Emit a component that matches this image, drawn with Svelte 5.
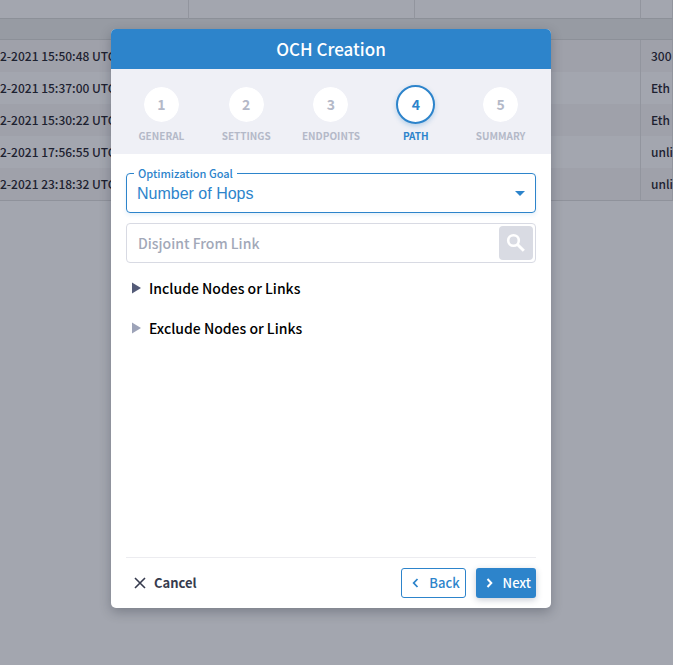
<script>
  const events = [
    { time: '2-2021 15:50:48 UTC', rate: '300' },
    { time: '2-2021 15:37:00 UTC', rate: 'Eth' },
    { time: '2-2021 15:30:22 UTC', rate: 'Eth' },
    { time: '2-2021 17:56:55 UTC', rate: 'unli' },
    { time: '2-2021 23:18:32 UTC', rate: 'unli' }
  ]

  const steps = ['General', 'Settings', 'Endpoints', 'Path', 'Summary']
  let current = 3

  let goal = 'Number of Hops'
  let disjoint = ''
  let includeOpen = false
  let excludeOpen = false
</script>

<div class="page">
  <table class="events">
    <thead>
      <tr><th></th><th></th><th></th><th></th></tr>
    </thead>
    <tbody>
      <tr class="filler"><td colspan="4"></td></tr>
      {#each events as event}
        <tr>
          <td>{event.time}</td>
          <td></td>
          <td></td>
          <td>{event.rate}</td>
        </tr>
      {/each}
    </tbody>
  </table>

  <div class="overlay">
    <div class="modal" role="dialog" aria-labelledby="title">
      <h1 id="title">OCH Creation</h1>

      <ol class="steps">
        {#each steps as step, i}
          <li class:active={i === current}>
            <span class="number">{i + 1}</span>
            <span class="name">{step}</span>
          </li>
        {/each}
      </ol>

      <div class="content">
        <fieldset class="goal">
          <legend><label for="goal">Optimization Goal</label></legend>
          <select id="goal" bind:value={goal}>
            <option>Number of Hops</option>
          </select>
          <svg class="caret" width="10" height="5" viewBox="0 0 10 5" aria-hidden="true">
            <path d="M0 0h10L5 5z" fill="currentColor" />
          </svg>
        </fieldset>

        <div class="disjoint">
          <input type="text" aria-label="Disjoint From Link" placeholder="Disjoint From Link" bind:value={disjoint} />
          <button class="search" aria-label="Search">
            <svg width="24" height="24" viewBox="0 0 24 24" aria-hidden="true">
              <circle cx="9.5" cy="9.5" r="5.3" fill="none" stroke="#fff" stroke-width="2.6" />
              <path d="M13.5 13.5l6.3 6.3" stroke="#fff" stroke-width="3" />
            </svg>
          </button>
        </div>

        <button class="toggle include" aria-expanded={includeOpen} on:click={() => includeOpen = !includeOpen}>
          <svg width="9" height="12" viewBox="0 0 9 12" aria-hidden="true"><path d="M0 .5v11L9 6z" fill="currentColor" /></svg>
          <span>Include Nodes or Links</span>
        </button>
        <button class="toggle exclude" aria-expanded={excludeOpen} on:click={() => excludeOpen = !excludeOpen}>
          <svg width="9" height="12" viewBox="0 0 9 12" aria-hidden="true"><path d="M0 .5v11L9 6z" fill="currentColor" /></svg>
          <span>Exclude Nodes or Links</span>
        </button>
      </div>

      <div class="footer">
        <button class="cancel">
          <svg width="12" height="12" viewBox="0 0 12 12" aria-hidden="true">
            <path d="M1 1l10 10M11 1L1 11" stroke="currentColor" stroke-width="1.6" />
          </svg>
          Cancel
        </button>
        <button class="back">
          <svg width="7" height="10" viewBox="0 0 7 10" aria-hidden="true">
            <path d="M5.5 1L1.7 5l3.8 4" fill="none" stroke="currentColor" stroke-width="1.8" />
          </svg>
          Back
        </button>
        <button class="next">
          <svg width="7" height="10" viewBox="0 0 7 10" aria-hidden="true">
            <path d="M1.5 1l3.8 4-3.8 4" fill="none" stroke="currentColor" stroke-width="2" />
          </svg>
          Next
        </button>
      </div>
    </div>
  </div>
</div>

<style>
  :global(body) {
    background: #a3a6af;
  }

  .page {
    position: relative;
    min-height: 100vh;
    overflow: hidden;
    font-family: "Noto Sans CJK SC", "Open Sans", sans-serif;
    font-size: 14px;
    line-height: 20px;
    color: #1d2130;
  }

  button, input {
    font-family: inherit;
    font-size: inherit;
    line-height: inherit;
  }

  button {
    display: flex;
    align-items: center;
    box-sizing: border-box;
    padding: 0;
    border: none;
    background: none;
    cursor: pointer;
  }

  .events {
    width: 100%;
    table-layout: fixed;
    border-collapse: separate;
    border-spacing: 0;
    border-bottom: 1px solid #8f929b;
    font-size: 12px;
    font-weight: 500;
    white-space: nowrap;
  }

  .events th, .events td {
    box-sizing: border-box;
    padding: 0;
    border-right: 1px solid #92959e;
  }

  .events th {
    height: 19px;
    border-bottom: 1px solid #8c9098;
  }

  .events th:first-child {
    width: 189px;
  }

  .events th:nth-child(2), .events th:nth-child(3) {
    width: 226px;
  }

  .events td {
    height: 32px;
  }

  .events td:last-child {
    padding-left: 10px;
  }

  .events tr:nth-child(even) td {
    background: #9fa1aa;
  }

  .events .filler td {
    height: 21px;
    background: #979ba3;
    border-bottom: 1px solid #8c9098;
  }

  .overlay {
    position: absolute;
    inset: 0;
    display: flex;
    justify-content: center;
    align-items: flex-start;
    padding: 29px 11px 0 0;
  }

  .modal {
    width: 100%;
    max-width: 440px;
    border-radius: 5px;
    overflow: hidden;
    background: #fff;
    box-shadow: 0 4px 12px rgba(30, 35, 50, 0.3);
  }

  h1 {
    margin: 0;
    background: #2d84cb;
    color: #fff;
    font-size: 17px;
    font-weight: 500;
    line-height: 40px;
    text-align: center;
  }

  .steps {
    display: flex;
    margin: 0;
    padding: 16px 8px 8px;
    list-style: none;
    background: #eff0f6;
    color: #b4b9c8;
    font-weight: bold;
  }

  .steps li {
    display: flex;
    flex: 1;
    flex-direction: column;
    align-items: center;
  }

  .number {
    box-sizing: border-box;
    width: 39px;
    height: 39px;
    border: 2px solid #eff0f6;
    border-radius: 50%;
    background: #fff;
    background-clip: padding-box;
    font-size: 14px;
    line-height: 35px;
    text-align: center;
  }

  .name {
    margin-top: 2px;
    font-size: 10px;
    text-transform: uppercase;
  }

  .active {
    color: #2d84cb;
  }

  .active .number {
    border-color: #2d84cb;
    box-shadow: 0 2px 5px rgba(45, 132, 203, 0.3);
  }

  .content {
    min-height: 388px;
    padding: 15px 15px 0;
  }

  .goal {
    position: relative;
    min-width: 0;
    margin: 0;
    padding: 0;
    height: 44px;
    box-sizing: border-box;
    border: 1px solid #2d84cb;
    border-radius: 4px;
    color: #2d84cb;
    box-shadow: 0 2px 4px rgba(45, 132, 203, 0.12);
  }

  legend {
    height: 8px;
    margin-left: 7px;
    padding: 0 4px;
    font-size: 11px;
    font-weight: 500;
    line-height: 8px;
  }

  select {
    display: block;
    width: 100%;
    height: 32px;
    padding: 0 10px;
    border: none;
    outline: none;
    appearance: none;
    background: none;
    color: inherit;
    font-family: "Liberation Sans", Arial, sans-serif;
    font-size: 16px;
  }

  .caret {
    position: absolute;
    right: 10px;
    top: 14px;
    pointer-events: none;
  }

  .disjoint {
    display: flex;
    align-items: center;
    box-sizing: border-box;
    height: 40px;
    margin: 10px 0;
    padding-right: 2px;
    border: 1px solid #d8dae3;
    border-radius: 4px;
  }

  input {
    flex: 1;
    min-width: 0;
    padding: 0 11px;
    border: none;
    outline: none;
    background: none;
    color: #1d2130;
    font-weight: 500;
  }

  input::placeholder {
    color: #a2a8b8;
    opacity: 1;
  }

  .search {
    justify-content: center;
    width: 34px;
    height: 34px;
    border-radius: 4px;
    background: #d9dbe3;
  }

  .toggle {
    gap: 8px;
    width: 100%;
    height: 30px;
    margin-bottom: 10px;
    padding-left: 6px;
    color: #545b78;
    font-weight: 500;
  }

  .toggle span {
    color: #000;
  }

  .exclude {
    color: #9da3b8;
  }

  .footer {
    display: flex;
    gap: 10px;
    margin: 0 15px;
    padding: 10px 0;
    border-top: 1px solid #ececf0;
  }

  .footer button {
    height: 30px;
    border-radius: 3px;
    font-size: 13px;
    font-weight: 500;
  }

  .footer .cancel {
    gap: 8px;
    margin-right: auto;
    padding-left: 8px;
    color: #363b4e;
    font-weight: bold;
  }

  .back, .next {
    gap: 10px;
  }

  .back {
    padding: 0 5px 0 10px;
    border: 1px solid #2d84cb;
    color: #2d84cb;
  }

  .next {
    padding: 0 5px 0 10px;
    background: #2d84cb;
    color: #fff;
    box-shadow: 0 2px 6px rgba(45, 60, 90, 0.25);
  }
</style>
